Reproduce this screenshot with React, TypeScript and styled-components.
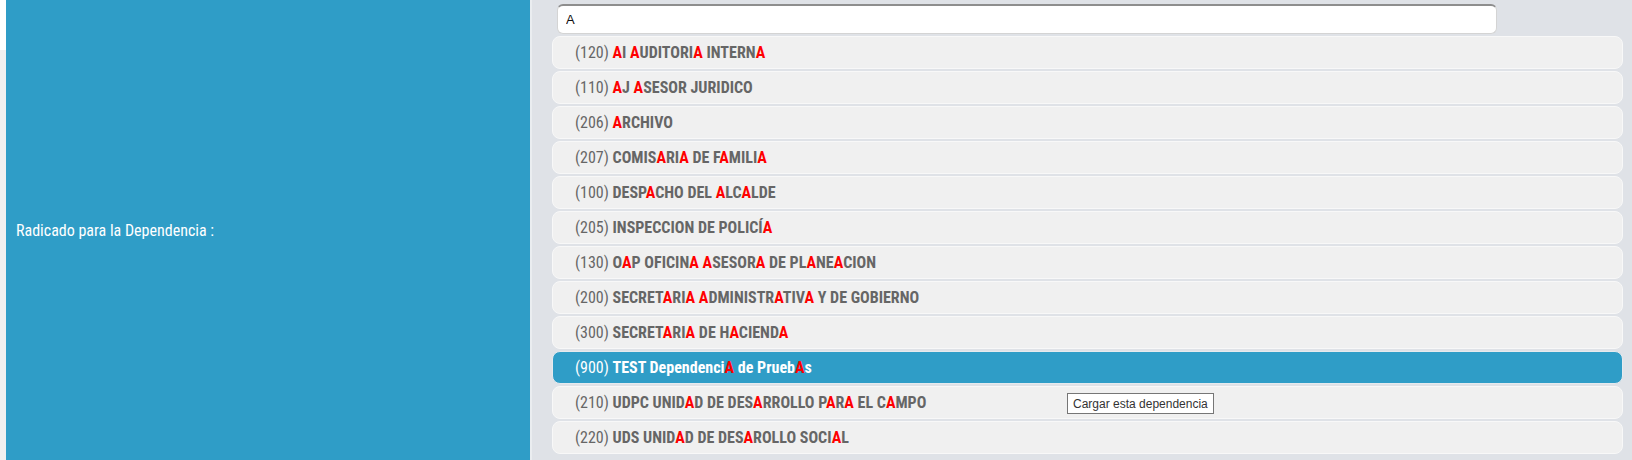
import * as React from 'react';
import styled, { createGlobalStyle } from 'styled-components';

const GlobalStyle = createGlobalStyle`
  body {
    margin: 0;
    overflow: hidden;
    background: #dfe2e7;
    font-family: "Roboto Condensed", Roboto, "Liberation Sans", sans-serif;
  }
`;

const dependencias = [
  { code: '120', name: 'AI AUDITORIA INTERNA' },
  { code: '110', name: 'AJ ASESOR JURIDICO' },
  { code: '206', name: 'ARCHIVO' },
  { code: '207', name: 'COMISARIA DE FAMILIA' },
  { code: '100', name: 'DESPACHO DEL ALCALDE' },
  { code: '205', name: 'INSPECCION DE POLICÍA' },
  { code: '130', name: 'OAP OFICINA ASESORA DE PLANEACION' },
  { code: '200', name: 'SECRETARIA ADMINISTRATIVA Y DE GOBIERNO' },
  { code: '300', name: 'SECRETARIA DE HACIENDA' },
  { code: '900', name: 'TEST DependenciA de PruebAs' },
  { code: '210', name: 'UDPC UNIDAD DE DESARROLLO PARA EL CAMPO' },
  { code: '220', name: 'UDS UNIDAD DE DESAROLLO SOCIAL' },
];

const Page = styled.div`
  display: flex;
  height: 460px;
  width: 1632px;
`;

const Gutter = styled.div`
  width: 6px;
  flex-shrink: 0;
  background: linear-gradient(#ffffff 0 50px, #f0f0f0 50px);
`;

const LabelCell = styled.div`
  width: 524px;
  flex-shrink: 0;
  background: #2f9dc7;
  display: flex;
  align-items: center;
  padding-left: 10px;
  box-sizing: border-box;
  color: #ffffff;
  font-size: 16px;
  font-stretch: condensed;
`;

const Divider = styled.div`
  width: 2px;
  flex-shrink: 0;
  background: #eaedf0;
`;

const FieldCell = styled.div`
  position: relative;
  flex: 1;
  background: #dfe2e7;
  padding: 4px 9px 0 20px;
  display: flex;
  flex-direction: column;
  gap: 2px;
`;

const SearchInput = styled.input`
  width: 940px;
  height: 30px;
  margin-left: 5px;
  box-sizing: border-box;
  border: 1px solid #d4d4d4;
  border-top: 2px solid #8e8e8e;
  border-radius: 6px;
  background: #ffffff;
  padding: 0 8px;
  font-family: "Liberation Sans", Arial, sans-serif;
  font-size: 13px;
  color: #111;
  outline: none;
  caret-color: #000;
`;

const List = styled.div`
  display: flex;
  flex-direction: column;
  gap: 2px;
`;

const Option = styled.div<{ $selected?: boolean }>`
  height: 33px;
  box-sizing: border-box;
  border: 1px solid ${p => (p.$selected ? '#e6eaee' : '#f8f8f8')};
  border-radius: 8px;
  background: ${p => (p.$selected ? '#2f9dc7' : '#f0f0f0')};
  display: flex;
  align-items: center;
  padding-left: 22px;
  font-size: 16px;
  font-stretch: condensed;
  color: ${p => (p.$selected ? '#ffffff' : '#666666')};
  white-space: pre;
`;

const Name = styled.b`
  font-weight: 700;
  color: inherit;
`;

const Match = styled.span`
  color: #ff0000;
`;

const Tooltip = styled.div`
  position: absolute;
  left: 535px;
  top: 393px;
  height: 21px;
  padding: 0 5px;
  box-sizing: border-box;
  display: flex;
  align-items: center;
  background: #ffffff;
  border: 1px solid #767676;
  font-family: "Liberation Sans", Arial, sans-serif;
  font-size: 12px;
  color: #333333;
`;

function highlight(text: string) {
  const parts = text.split('A');
  return parts.map((part, i) => (
    <React.Fragment key={i}>
      {part}
      {i < parts.length - 1 && <Match>A</Match>}
    </React.Fragment>
  ));
}

export default function App() {
  return (
    <>
      <GlobalStyle />
      <Page>
        <Gutter />
        <LabelCell>Radicado para la Dependencia :</LabelCell>
        <Divider />
        <FieldCell>
          <SearchInput defaultValue="A" autoFocus />
          <List>
            {dependencias.map(dep => (
              <Option key={dep.code} $selected={dep.code === '900'}>
                ({dep.code}) <Name>{highlight(dep.name)}</Name>
              </Option>
            ))}
          </List>
          <Tooltip>Cargar esta dependencia</Tooltip>
        </FieldCell>
      </Page>
    </>
  );
}
